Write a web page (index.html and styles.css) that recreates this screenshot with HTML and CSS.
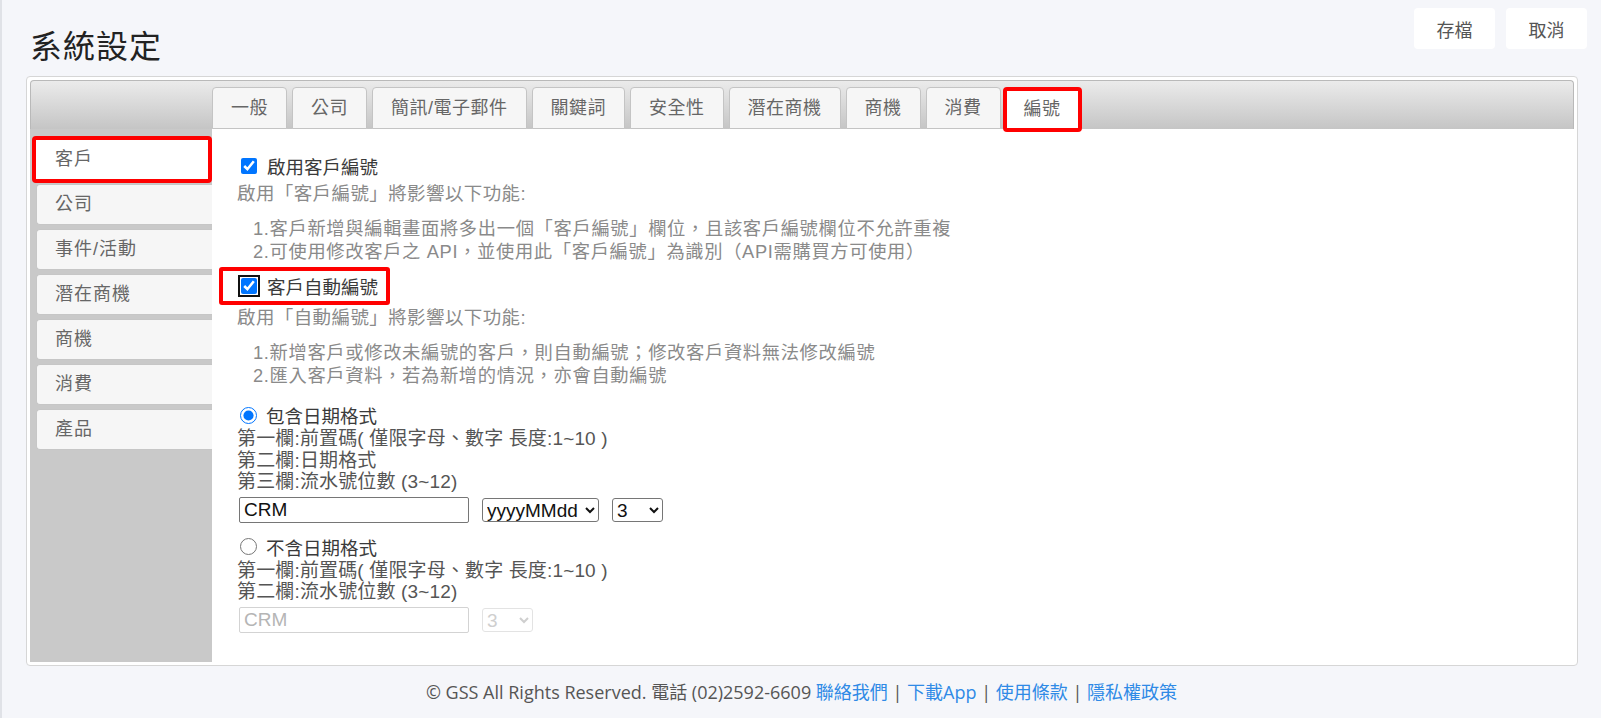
FILE: index.html
```html
<!DOCTYPE html>
<html lang="zh-Hant">
<head>
    <meta charset="UTF-8">
    <meta name="viewport" content="width=device-width, initial-scale=1.0">
    <title>系統設定</title>
    <link rel="stylesheet" href="styles.css">
</head>
<body>
    <div class="page">
        <div class="page-header">
            <h1>系統設定</h1>
            <div class="actions">
                <button class="btn">存檔</button>
                <button class="btn">取消</button>
            </div>
        </div>

        <div class="panel">
            <div class="tab-bar">
                <div class="tab">一般</div>
                <div class="tab">公司</div>
                <div class="tab">簡訊/電子郵件</div>
                <div class="tab">關鍵詞</div>
                <div class="tab">安全性</div>
                <div class="tab">潛在商機</div>
                <div class="tab">商機</div>
                <div class="tab">消費</div>
                <div class="tab active">編號</div>
            </div>

            <div class="panel-body">
                <ul class="side-nav">
                    <li class="active">客戶</li>
                    <li>公司</li>
                    <li>事件/活動</li>
                    <li>潛在商機</li>
                    <li>商機</li>
                    <li>消費</li>
                    <li>產品</li>
                </ul>

                <div class="content">
                    <label class="check-row"><input type="checkbox" checked>啟用客戶編號</label>
                    <p class="notice">啟用「客戶編號」將影響以下功能:</p>
                    <ul class="notes">
                        <li>1.客戶新增與編輯畫面將多出一個「客戶編號」欄位，且該客戶編號欄位不允許重複</li>
                        <li>2.可使用修改客戶之 API，並使用此「客戶編號」為識別（API需購買方可使用）</li>
                    </ul>

                    <label class="check-row marked"><input type="checkbox" class="focused" checked>客戶自動編號</label>
                    <p class="notice">啟用「自動編號」將影響以下功能:</p>
                    <ul class="notes">
                        <li>1.新增客戶或修改未編號的客戶，則自動編號；修改客戶資料無法修改編號</li>
                        <li>2.匯入客戶資料，若為新增的情況，亦會自動編號</li>
                    </ul>

                    <label class="radio-row first"><input type="radio" name="format" checked>包含日期格式</label>
                    <div class="rules">
                        <div>第一欄:前置碼( 僅限字母、數字 長度:1~10 )</div>
                        <div>第二欄:日期格式</div>
                        <div>第三欄:流水號位數 (3~12)</div>
                    </div>
                    <div class="field-row">
                        <input type="text" class="prefix" value="CRM">
                        <select class="date-format">
                            <option>yyyyMMdd</option>
                        </select>
                        <select class="digits">
                            <option>3</option>
                        </select>
                    </div>

                    <label class="radio-row"><input type="radio" name="format">不含日期格式</label>
                    <div class="rules">
                        <div>第一欄:前置碼( 僅限字母、數字 長度:1~10 )</div>
                        <div>第二欄:流水號位數 (3~12)</div>
                    </div>
                    <div class="field-row off">
                        <input type="text" class="prefix" value="CRM" disabled>
                        <select class="digits" disabled>
                            <option>3</option>
                        </select>
                    </div>
                </div>
            </div>
        </div>

        <div class="footer">
            © GSS All Rights Reserved. 電話 (02)2592-6609 <a href="#">聯絡我們</a> | <a href="#">下載App</a> | <a href="#">使用條款</a> | <a href="#">隱私權政策</a>
        </div>
    </div>
</body>
</html>
```

FILE: styles.css
```css
body {
    margin: 0;
    background-color: #f5f6fa;
    font-family: "Liberation Sans", Arial, "Noto Sans CJK TC", sans-serif;
    color: #333;
}
.page {
    border-left: 2px solid #e0e2e7;
    min-height: 718px;
    box-sizing: border-box;
}
.page-header {
    display: flex;
    justify-content: space-between;
    align-items: flex-start;
    height: 76px;
    box-sizing: border-box;
    padding: 8px 14px 0 28px;
}
h1 {
    margin: 19px 0 0;
    font-size: 32px;
    line-height: 40px;
    font-weight: normal;
    letter-spacing: 1px;
    color: #222;
}
.actions {
    display: flex;
    gap: 11px;
}
.btn {
    width: 81px;
    height: 41px;
    border: none;
    border-radius: 4px;
    background-color: #fff;
    color: #555;
    font-family: inherit;
    font-size: 18px;
    cursor: pointer;
}

/* outer settings box */
.panel {
    margin: 0 23px 0 24px;
    padding: 3px;
    border: 1px solid #d6d6d6;
    border-radius: 4px;
    background-color: #fff;
}
.tab-bar {
    display: flex;
    align-items: flex-end;
    gap: 5px;
    height: 49px;
    box-sizing: border-box;
    padding-left: 181px;
    border: 1px solid #b9b9b9;
    border-bottom: none;
    border-radius: 4px 4px 0 0;
    background: linear-gradient(#ebebeb, #c5c5c5);
}
.tab {
    height: 42px;
    box-sizing: border-box;
    padding: 0 18px;
    border: 1px solid #c4c4c4;
    border-radius: 4px 4px 0 0;
    background-color: #f6f6f6;
    color: #666;
    font-size: 18px;
    line-height: 40px;
    letter-spacing: 0.5px;
    white-space: nowrap;
}
.tab.active {
    position: relative;
    z-index: 1;
    height: 45px;
    margin: 0 0 -3px -3px;
    padding: 0 17px;
    border: 4px solid #ff0000;
    border-radius: 4px;
    background-color: #fff;
    line-height: 36px;
}

.panel-body {
    display: flex;
    height: 533px;
}
.side-nav {
    width: 182px;
    flex-shrink: 0;
    margin: 0;
    padding: 10px 0 0 6px;
    box-sizing: border-box;
    list-style: none;
    background-color: #c9c9c9;
}
.side-nav li {
    height: 41px;
    box-sizing: border-box;
    margin-bottom: 4px;
    padding-left: 18px;
    border: 1px solid #c6c6c6;
    border-right: none;
    border-radius: 4px 0 0 4px;
    background-color: #f6f6f6;
    color: #666;
    font-size: 18px;
    line-height: 39px;
    letter-spacing: 1px;
}
.side-nav li.active {
    height: 47px;
    margin: -3px 0 1px -4px;
    padding-left: 19px;
    border: 4px solid #ff0000;
    border-radius: 4px;
    background-color: #fff;
}

.content {
    flex-grow: 1;
    padding: 22px 0 0 25px;
    background-color: #fff;
}
.check-row, .radio-row {
    display: flex;
    align-items: center;
    height: 30px;
    font-size: 18.5px;
    color: #3a3a3a;
}
.check-row input {
    width: 16px;
    height: 16px;
    margin: 0 10px 0 4px;
}
.check-row.marked {
    display: inline-flex;
    height: 38px;
    box-sizing: border-box;
    margin: 4px 0 0 -18px;
    padding: 0 8px 0 14px;
    border: 4px solid #ff0000;
    border-radius: 3px;
}
.focused {
    outline: 2px solid #111;
    outline-offset: 1px;
    border-radius: 3px;
}
.notice {
    margin: 1px 0 0;
    font-size: 18.5px;
    line-height: 24px;
    letter-spacing: 0.4px;
    color: #8a8a8a;
}
.notes {
    margin: 11px 0 0;
    padding-left: 16px;
    list-style: none;
    font-size: 18.3px;
    line-height: 23px;
    letter-spacing: 0.65px;
    color: #8a8a8a;
}
.radio-row {
    height: 26px;
    margin-top: 10px;
}
.radio-row.first {
    margin-top: 15px;
}
.radio-row input {
    width: 17px;
    height: 17px;
    margin: 0 9px 0 3px;
}
.rules {
    font-size: 19px;
    line-height: 21.5px;
    letter-spacing: 0.15px;
    color: #555;
}
.field-row {
    display: flex;
    align-items: center;
    gap: 12px;
    margin: 4px 0 0 2px;
    height: 27px;
}
.field-row.off {
    margin-top: 4px;
}
.prefix {
    width: 230px;
    height: 26px;
    box-sizing: border-box;
    padding: 0 4px;
    border: 1px solid #767676;
    border-radius: 2px;
    font-family: "Liberation Sans", Arial, sans-serif;
    font-size: 19px;
    color: #111;
}
.field-row select {
    height: 24px;
    margin-left: 1px;
    border: 1px solid #767676;
    border-radius: 3px;
    background-color: #fff;
    font-family: "Liberation Sans", Arial, sans-serif;
    font-size: 19px;
    color: #111;
}
.date-format {
    width: 117px;
}
.digits {
    width: 51px;
}
.prefix:disabled {
    background-color: #fff;
    border-color: #d3d3d3;
    color: #b5b5b5;
}
.field-row select:disabled {
    border-color: #d8d8d8;
    color: #bbb;
}

.footer {
    padding-top: 16px;
    text-align: center;
    font-family: "Open Sans", "Noto Sans CJK TC", sans-serif;
    font-size: 18px;
    line-height: 20px;
    color: #555;
}
.footer a {
    color: #2f8ae6;
    text-decoration: none;
}
```
